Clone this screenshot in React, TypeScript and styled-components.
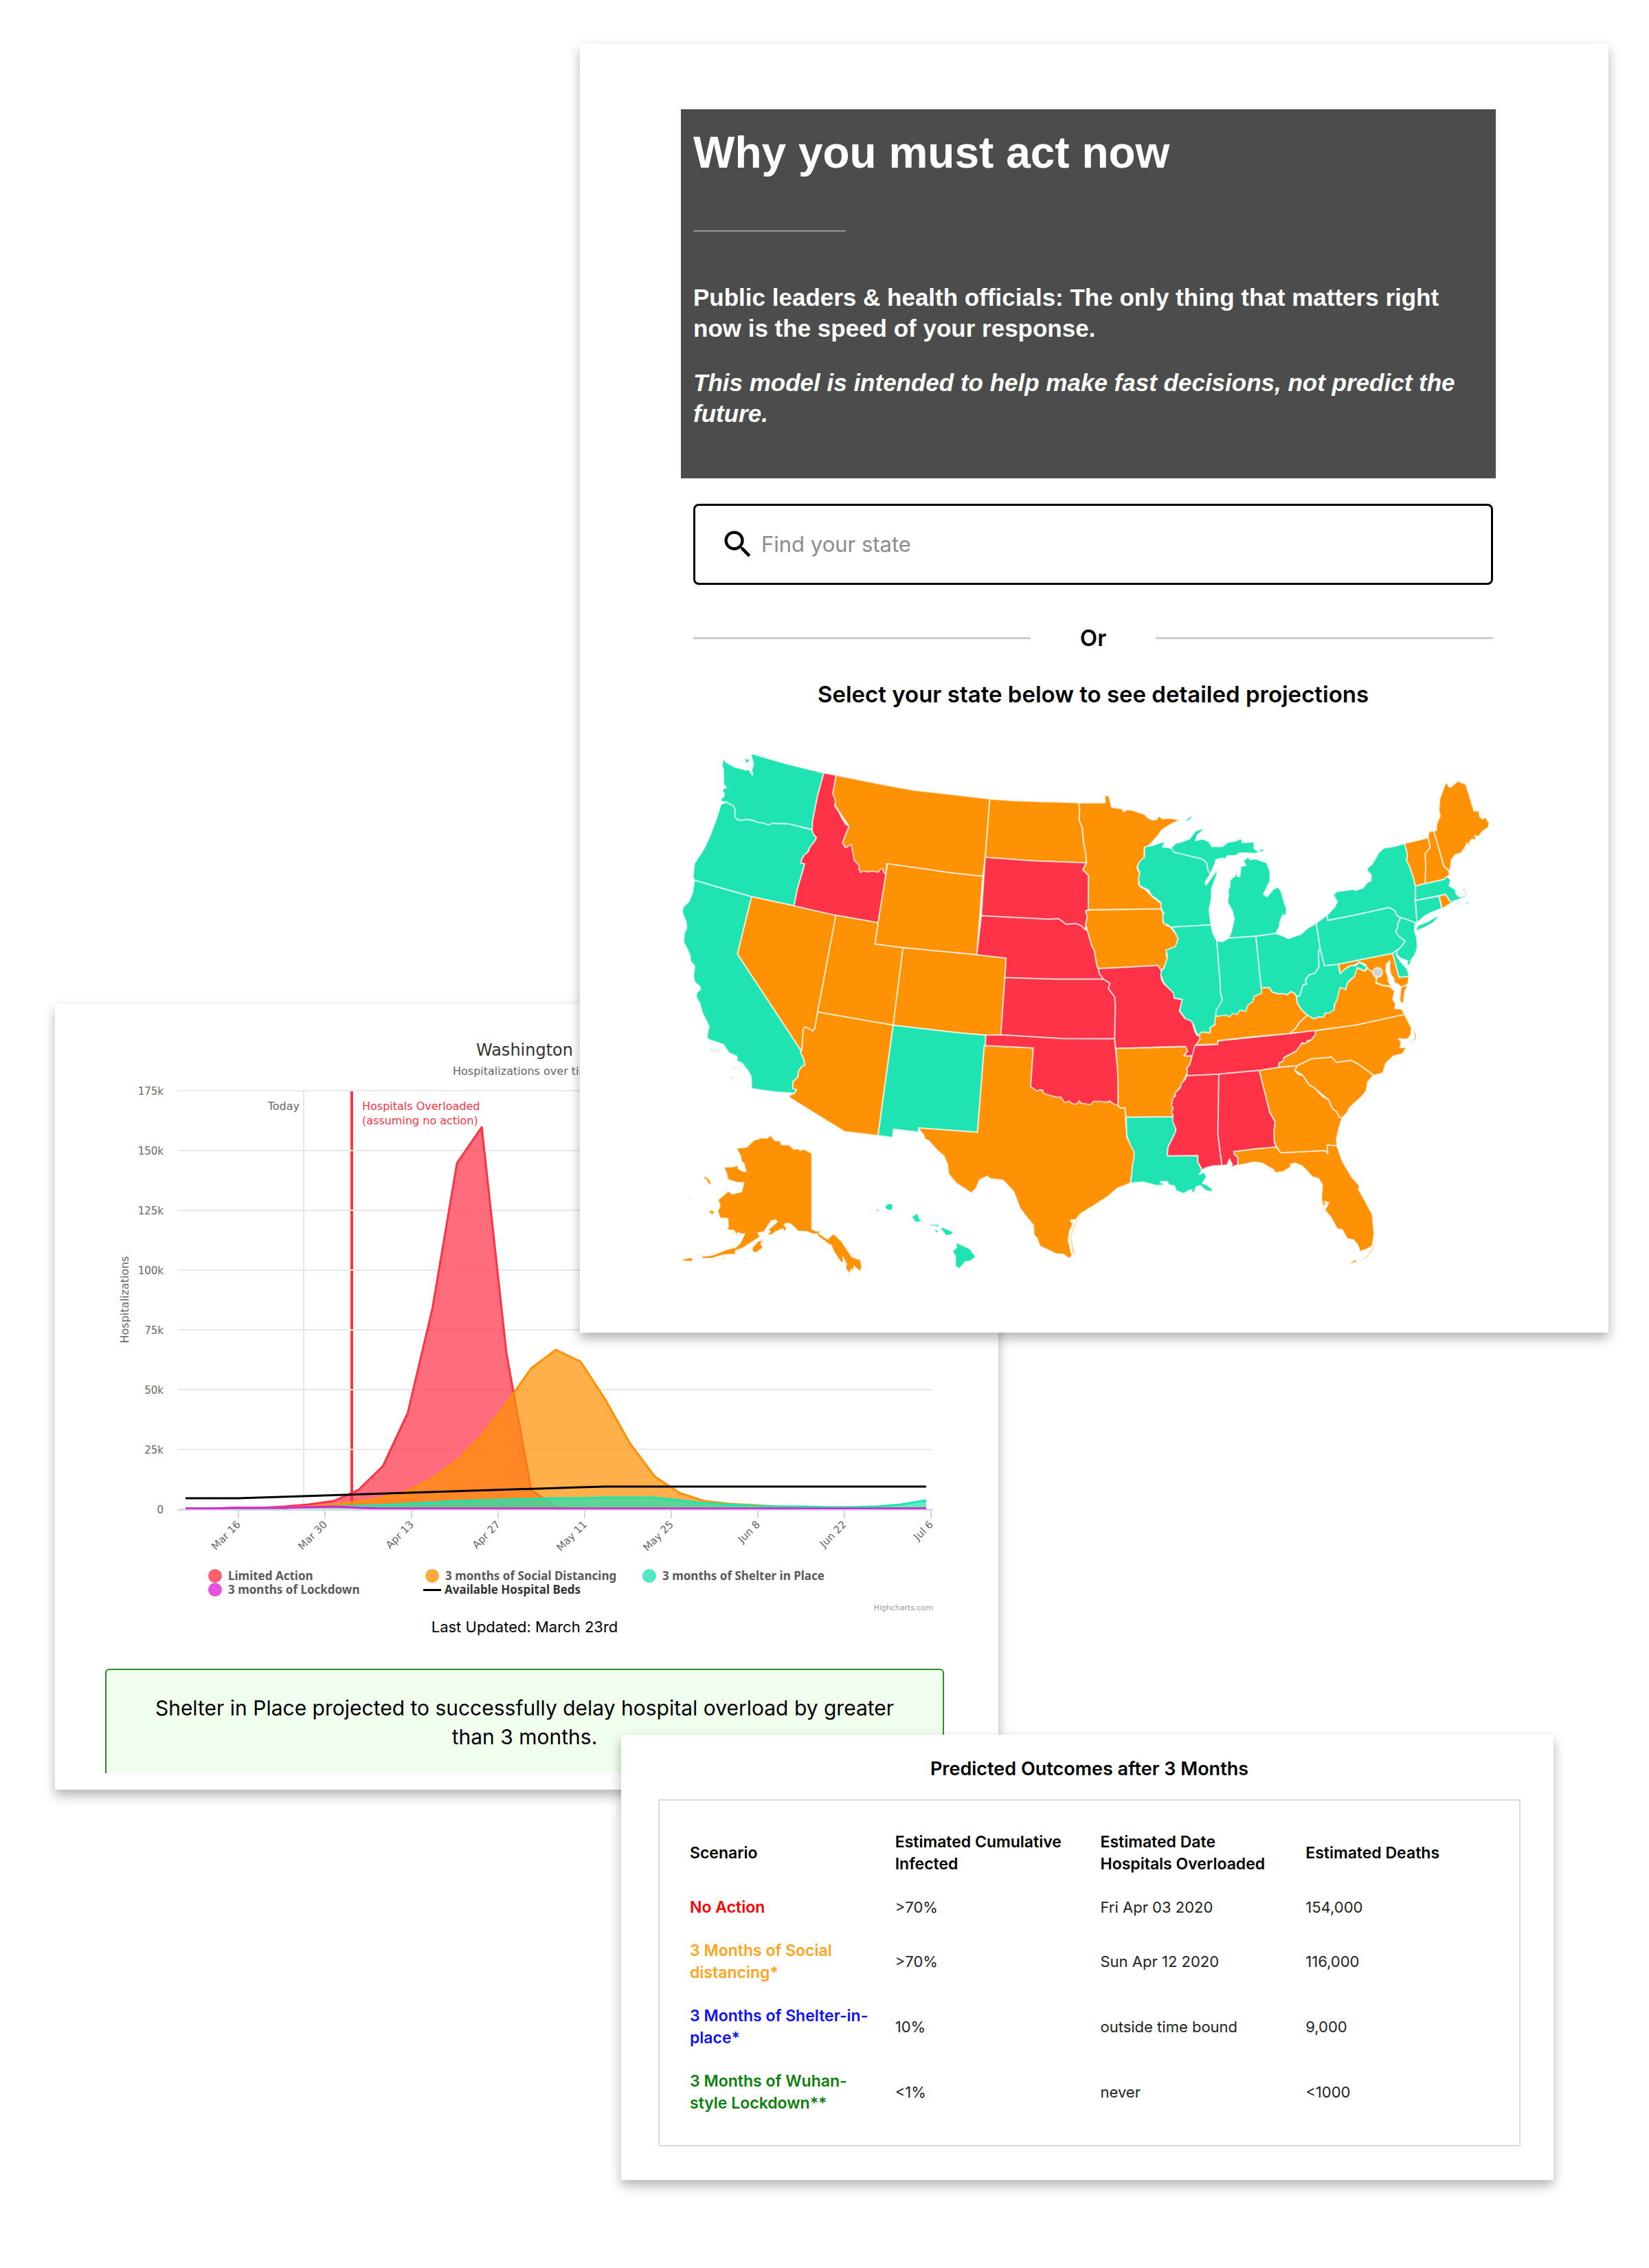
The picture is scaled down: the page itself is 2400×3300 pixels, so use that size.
import React from "react";
import styled, { createGlobalStyle } from "styled-components";
import { MdSearch } from "react-icons/md";

const teal = "#20e3b2";
const orange = "#ff9105";
const red = "#ff3348";
const magenta = "#dd22d5";

const GlobalStyle = createGlobalStyle`
  *, *::before, *::after { box-sizing: border-box; }
  body {
    margin: 0;
    background: #fff;
    color: #000;
    font-family: Inter, "Liberation Sans", sans-serif;
  }
  h1, h2, p, ul { margin: 0; padding: 0; }
`;

/* ---------- Page: three overlapping sheets on one grid ---------- */

const Page = styled.main`
  display: grid;
  grid-template-columns: 80fr 764fr 60fr 549fr 808fr 80fr 59fr;
  padding: 64px 0 126px;
`;

const Sheet = styled.section`
  background: #fff;
  box-shadow: 0 8px 16px rgba(0, 0, 0, 0.3);
  min-width: 0;
`;

const ActSheet = styled(Sheet)`
  grid-column: 3 / 7;
  grid-row: 1;
  z-index: 2;
  padding: 95px 164px 80px 147px;
`;

const ChartSheet = styled(Sheet)`
  grid-column: 2 / 5;
  grid-row: 2;
  z-index: 1;
  margin-top: -478px;
  padding: 49px 79px 24px 73px;
  display: flex;
  flex-direction: column;
`;

const OutcomeSheet = styled(Sheet)`
  grid-column: 4 / 6;
  grid-row: 3;
  z-index: 3;
  margin-top: -80px;
  padding: 34px 48px 49px 54px;
`;

/* ---------- Act now ---------- */

const Banner = styled.header`
  background: #4c4c4c;
  color: #fff;
  padding: 23px 18px 72px;
  font-family: "Liberation Sans", Arial, sans-serif;
  font-weight: 700;
`;

const BannerTitle = styled.h1`
  font-size: 64px;
  line-height: 80px;
`;

const BannerRule = styled.hr`
  width: 222px;
  height: 2px;
  margin: 73px 0;
  border: 0;
  background: #979797;
`;

const BannerText = styled.p<{ $italic?: boolean }>`
  font-size: 35px;
  line-height: 45px;
  font-style: ${(p) => (p.$italic ? "italic" : "normal")};
  & + & { margin-top: 34px; }
`;

const Picker = styled.div`
  padding: 37px 4px 0 18px;
`;

const SearchField = styled.label`
  display: flex;
  align-items: center;
  gap: 8px;
  height: 118px;
  padding: 0 36px;
  border: 3px solid #000;
  border-radius: 8px;
  svg { flex: none; }
`;

const SearchInput = styled.input`
  flex: 1;
  min-width: 0;
  border: 0;
  outline: 0;
  padding: 0;
  background: transparent;
  font: 400 31px/40px Inter, sans-serif;
  &::placeholder { color: #8c8c8c; opacity: 1; }
`;

const OrDivider = styled.div`
  display: grid;
  grid-template-columns: 1fr 182px 1fr;
  align-items: center;
  margin-top: 57px;
  font-size: 33px;
  line-height: 40px;
  font-weight: 600;
  text-align: center;
  &::before, &::after {
    content: "";
    height: 3px;
    background: #ccc;
  }
`;

const PickerHint = styled.h2`
  margin-top: 42px;
  font-size: 33px;
  line-height: 40px;
  font-weight: 600;
  text-align: center;
`;

const MapSvg = styled.svg`
  display: block;
  width: 100%;
  height: auto;
  margin-top: 59px;
  path, circle {
    stroke: rgba(255, 255, 255, 0.65);
    stroke-width: 2px;
    stroke-linejoin: round;
    vector-effect: non-scaling-stroke;
  }
`;

type Shape = [code: string, fill: string, d: string];
interface Region {
  transform: string;
  shapes: Shape[];
}

const regions: Region[] = [
  {
    transform: "translate(970 1080) scale(.33333 .35714)",
    shapes: [
      ["WA", teal, "M247 70 262 85 280 95 300 105 325 110 350 117 358 112 374 135 378 135 372 118 380 90 376 75 369 58 373 50 520 90 687 128 660 220 638 325 636 360 600 350 530 335 470 334 445 340 400 330 380 322 350 317 330 321 312 320 298 306 299 275 290 260 275 255 262 246 240 246 238 232 250 225 253 212 246 205 247 192 262 188 250 175 248 110 243 100ZM338 72 362 70 362 80 350 91 345 80ZM355 108 366 98 362 110Z"],
      ["OR", teal, "M238 256 262 246 275 255 290 260 299 275 298 306 312 320 330 321 350 317 380 322 400 330 420 331 445 340 470 331 470 334 530 335 636 360 642 378 655 390 650 402 625 432 618 450 602 462 590 480 588 495 604 498 600 512 572 600 557 669 372 632 250 600 122 565 116 550 122 497 165 435 190 385 218 315Z"],
      ["CA", teal, "M122 565 250 600 372 632 310 865 585 1255 587 1270 598 1290 605 1318 590 1325 577 1342 573 1368 553 1385 552 1413 568 1418 560 1433 480 1428 372 1414 370 1365 355 1340 330 1310 308 1302 308 1282 272 1268 250 1235 180 1212 177 1200 186 1160 158 1108 145 1065 130 1040 133 1022 148 1010 145 997 123 980 118 955 123 915 104 892 104 872 75 815 78 780 88 762 86 735 68 692 75 672 98 652 114 615ZM188 1254 206 1256 200 1263ZM210 1254 236 1265 215 1263ZM288 1321 305 1336 294 1334ZM281 1359 293 1375 284 1371Z"],
      ["NV", orange, "M372 632 557 669 740 708 660 1102 648 1168 638 1180 620 1168 605 1163 597 1172 592 1250 585 1255 310 865Z"],
      ["MT", orange, "M740 137 970 180 1080 198 1260 217 1412 234 1392 472 1381 549 1260 537 962 498 958 543 925 540 848 540 820 485 782 433 768 412 797 345 738 262 726 213Z"],
      ["ID", red, "M687 128 740 137 726 213 738 242 734 262 750 283 768 315 782 337 797 345 768 412 782 433 807 418 820 485 842 505 840 520 848 533 862 527 880 531 900 528 925 533 932 522 944 518 948 533 958 543 924 738 740 708 557 669 572 600 600 512 604 498 588 495 590 480 602 462 618 450 625 432 650 402 655 390 642 378 636 360 638 325 660 220Z"],
      ["WY", orange, "M965 498 1260 537 1381 549 1355 869 1260 860 1033 840 910 825 924 738 958 543Z"],
      ["UT", orange, "M740 708 924 738 910 825 1033 840 990 1156 660 1102Z"],
      ["CO", orange, "M1033 840 1260 860 1355 869 1483 882 1478 962 1460 1195 1392 1196 1260 1185 990 1156Z"],
      ["AZ", orange, "M660 1102 990 1156 924 1605 778 1589 535 1449 540 1440 560 1433 568 1418 552 1413 553 1385 573 1368 577 1342 590 1325 605 1318 598 1290 587 1270 592 1250 597 1172 605 1163 620 1168 638 1180 648 1168Z"],
      ["NM", teal, "M990 1156 1260 1185 1394 1196 1393 1238 1388 1238 1358 1592 1101 1574 1101 1591 991 1579 987 1613 924 1605Z"],
      ["ND", orange, "M1412 234 1510 241 1798 249 1804 268 1802 320 1816 352 1820 400 1832 465 1834 494 1600 486 1392 472Z"],
      ["SD", red, "M1392 472 1600 486 1834 494 1818 522 1843 545 1842 685 1830 690 1838 715 1830 745 1830 768 1810 750 1785 741 1745 745 1713 722 1670 724 1375 710Z"],
      ["NE", red, "M1375 710 1670 724 1713 722 1745 745 1785 741 1810 750 1830 768 1836 762 1858 835 1868 850 1880 915 1886 925 1890 945 1908 968 1700 968 1478 962 1483 882 1355 869Z"],
      ["KS", red, "M1478 962 1700 968 1908 968 1936 984 1930 1006 1958 1042 1960 1080 1957 1211 1730 1210 1460 1195Z"],
      ["TX", orange, "M1388 1238 1602 1248 1590 1405 1700 1440 1972 1470 1972 1483 1985 1493 2003 1490 2004 1531 2011 1615 2042 1661 2045 1689 2035 1727 2033 1759 2025 1799 1968 1820 1928 1853 1875 1885 1808 1923 1787 1948 1765 1949 1769 1960 1778 1958 1761 1993 1754 2030 1771 2095 1757 2105 1734 2089 1701 2087 1680 2077 1631 2056 1618 2023 1604 2009 1603 1971 1573 1937 1544 1902 1517 1834 1470 1787 1413 1781 1401 1771 1368 1785 1352 1820 1332 1839 1292 1815 1265 1799 1232 1762 1227 1722 1212 1689 1178 1661 1145 1626 1129 1619 1122 1601 1105 1582 1101 1574 1358 1592ZM1812 1925 1784 1970 1767 2020 1782 2088 1775 2088 1762 2024 1778 1970Z"],
      ["OK", red, "M1394 1196 1460 1195 1730 1210 1957 1211 1960 1250 1972 1345 1972 1483 1952 1476 1935 1463 1928 1470 1918 1466 1910 1470 1902 1466 1865 1466 1850 1480 1808 1472 1803 1462 1790 1478 1768 1474 1760 1465 1738 1470 1722 1448 1705 1449 1648 1434 1643 1420 1630 1418 1618 1424 1590 1405 1602 1248 1393 1238Z"],
      ["MN", orange, "M1798 249 1915 250 1915 219 1932 222 1944 268 1990 274 1995 286 2012 277 2035 280 2090 298 2100 310 2120 319 2140 318 2150 303 2165 314 2200 312 2240 320 2200 338 2163 360 2140 390 2105 425 2086 432 2086 475 2060 500 2054 515 2066 535 2062 580 2070 592 2090 602 2125 635 2160 660 2160 682 1842 685 1843 545 1818 522 1834 494 1832 465 1820 400 1816 352 1802 320 1804 268Z"],
      ["IA", orange, "M1842 687 2160 682 2170 707 2168 735 2185 750 2200 755 2235 798 2225 835 2185 850 2182 870 2190 885 2180 905 2170 925 2162 932 2145 912 1960 922 1886 925 1880 915 1868 850 1858 835 1830 745 1838 715 1830 690Z"],
      ["MO", red, "M1886 925 1960 922 2145 912 2160 932 2160 965 2170 985 2218 1025 2218 1045 2254 1052 2240 1098 2262 1125 2295 1138 2305 1175 2315 1195 2330 1200 2325 1230 2308 1240 2300 1280 2258 1282 2274 1262 2264 1242 1962 1250 1957 1211 1960 1080 1958 1042 1930 1006 1936 984 1908 968 1890 945Z"],
    ],
  },
  {
    transform: "translate(1620 1450) scale(.33333)",
    shapes: [
      ["AR", orange, "M12 230 318 222 325 240 308 262 345 263 335 300 322 315 325 330 318 350 295 395 272 425 258 470 262 495 260 528 57 530 52 488 32 490 22 480 22 380 18 300Z"],
      ["LA", teal, "M57 530 260 528 275 590 268 605 240 660 237 698 370 697 370 725 388 760 375 780 398 770 408 790 390 818 410 825 435 845 430 855 405 850 380 828 362 834 355 855 340 863 345 845 330 850 308 863 275 850 268 830 245 825 235 810 205 812 225 825 190 828 130 812 77 817 85 740 92 700 92 680 75 650 60 610Z"],
      ["NC", orange, "M722 312 725 292 742 285 745 270 800 240 815 215 840 205 865 192 883 170 882 152 1055 128 1272 80 1303 140 1300 170 1285 190 1245 187 1258 200 1253 225 1280 226 1265 252 1225 262 1190 295 1178 337 1137 347 1070 297 1040 282 975 290 955 268 865 275 805 305ZM1303 138 1323 165 1323 190 1290 213 1316 188 1316 165Z"],
      ["SC", orange, "M805 305 865 275 955 268 975 290 1040 282 1070 297 1137 347 1112 375 1105 415 1085 440 1030 490 1025 505 1000 533 988 530 975 505 958 493 940 453 880 403 855 388 828 347 793 325Z"],
      ["MS", red, "M322 348 462 341 458 605 475 740 440 742 405 750 390 760 370 725 370 697 237 698 240 660 268 605 275 585 260 545 262 520 256 510 262 490 255 478 262 445 272 437 270 425 295 400 297 385 318 360Z"],
      ["AL", red, "M462 341 638 325 685 510 708 550 702 595 705 640 712 660 620 668 527 680 530 692 545 705 545 738 515 747 520 735 508 712 498 738 475 740 458 605Z"],
      ["FL", orange, "M527 680 620 668 712 660 732 685 925 675 937 688 935 650 978 655 1000 720 1040 788 1075 828 1072 845 1095 885 1132 955 1140 1040 1132 1090 1110 1105 1078 1116 1070 1090 1050 1065 1022 1060 1000 1020 980 1018 950 965 925 935 942 902 922 898 930 905 918 922 910 885 914 825 898 798 870 790 848 765 825 742 795 730 775 735 775 748 740 768 708 772 700 758 650 730 615 725 545 740 545 705 530 692ZM1144 1074 1134 1110 1110 1140 1080 1156 1108 1135 1130 1105ZM1028 1173 1055 1152 1068 1158 1045 1168Z"],
      ["GA", orange, "M638 325 722 312 805 305 793 325 808 342 828 347 855 388 880 403 915 440 940 453 958 493 975 505 988 530 1000 535 988 570 975 625 978 655 935 650 937 688 925 675 732 685 712 655 705 640 702 595 708 550 685 510Z"],
      ["TN", red, "M357 217 457 212 457 197 768 165 882 150 883 170 865 192 850 195 840 208 825 205 800 240 745 270 742 285 725 292 722 312 638 325 462 341 322 348 325 330 322 315 335 300 345 263Z"],
    ],
  },
  {
    transform: "translate(1620 1110) scale(.36995 .33333)",
    shapes: [
      ["WI", teal, "M125 370 160 362 205 345 195 370 212 372 228 375 240 393 275 400 310 412 350 422 368 438 374 475 384 485 362 525 366 537 395 490 412 470 405 500 388 550 386 600 378 645 385 710 300 716 228 720 215 710 200 705 195 675 200 660 190 640 188 612 150 580 140 558 105 540 100 510 105 480 95 458 103 435 123 415Z"],
      ["MI", teal, "M228 375 245 355 270 348 300 335 325 300 358 288 350 300 330 320 325 343 350 335 375 345 388 368 430 368 450 350 480 345 505 333 508 352 555 348 555 378 575 392 560 398 500 395 480 408 450 408 440 423 430 418 405 425 400 445 384 485 374 475 368 438 350 422 310 412 240 393ZM280 260 300 240 318 232 298 255ZM573 380 592 380 592 390 580 392ZM513 430 530 415 540 425 560 422 605 440 612 462 618 480 617 520 592 575 605 588 630 555 648 545 660 560 670 600 682 640 680 670 668 665 655 700 655 715 640 748 562 760 455 768 465 740 477 685 470 650 450 612 455 580 452 560 460 540 460 515 480 495 490 468 488 498 498 500 502 470 502 455 522 450Z"],
      ["IL", teal, "M228 720 385 710 392 745 408 780 422 970 422 1000 430 1040 405 1090 405 1115 400 1130 402 1145 382 1160 382 1182 350 1178 333 1193 322 1165 318 1150 308 1130 285 1120 262 1085 272 1035 240 1030 238 1008 200 965 188 930 190 910 200 900 215 850 208 820 245 805 256 770 240 735Z"],
      ["KY", orange, "M583 985 615 983 625 1003 650 1010 670 1010 685 1015 700 1000 715 1010 722 1022 725 1052 745 1085 765 1104 735 1135 720 1160 695 1184 560 1197 412 1215 412 1230 325 1234 342 1210 340 1195 333 1193 350 1178 382 1182 382 1160 402 1145 400 1130 405 1105 500 1070 560 1000Z"],
      ["IN", teal, "M408 780 430 784 455 768 562 760 583 985 585 1008 555 1022 550 1045 530 1060 522 1088 500 1082 488 1102 472 1096 458 1112 445 1104 405 1110 405 1085 430 1040 422 1000 422 970Z"],
      ["OH", teal, "M562 760 640 748 660 755 690 770 740 750 765 725 800 703 815 815 808 825 810 895 795 920 770 930 757 950 762 972 748 970 735 1020 722 1022 715 1010 700 1000 685 1015 670 1010 650 1010 625 1003 615 983 583 985Z"],
      ["VA", orange, "M765 1104 790 1120 808 1112 828 1112 835 1095 870 1080 872 1050 890 990 895 980 915 992 920 965 945 940 958 897 990 912 1000 900 1020 915 1035 940 1035 965 1060 975 1090 980 1108 1000 1100 1035 1112 1055 1108 1075 1136 1078 1147 1101 950 1148 800 1170 695 1184 720 1160 735 1135ZM1133 982 1160 970 1148 1000 1142 1050 1132 1053 1128 1030 1131 1000Z"],
      ["MD", orange, "M886 882 960 865 1100 834 1125 938 1164 935 1160 968 1135 982 1120 968 1106 962 1105 945 1092 925 1088 900 1089 866 1075 882 1074 915 1082 935 1083 958 1096 978 1060 973 1035 962 1038 940 1020 915 1000 900 992 882 970 872 950 885 930 890 910 905 895 925Z"],
      ["WV", teal, "M815 815 832 888 886 882 893 925 910 905 935 888 955 888 968 873 985 885 997 892 992 912 960 897 950 935 938 945 922 962 915 992 893 983 880 1040 870 1060 870 1080 850 1095 835 1095 828 1112 808 1112 790 1120 765 1104 745 1085 725 1052 722 1022 735 1020 748 970 762 972 757 950 770 930 795 920 810 895 808 825Z"],
      ["PA", teal, "M800 703 840 668 845 690 945 668 1088 634 1110 650 1117 670 1132 678 1120 705 1120 722 1112 740 1125 760 1150 782 1130 810 1100 834 960 865 886 882 832 888 815 815Z"],
      ["NY", teal, "M842 668 870 635 882 610 867 580 880 565 945 555 955 560 985 548 1000 525 1015 518 1015 490 1000 475 1002 460 1020 445 1045 395 1065 375 1105 368 1147 355 1158 400 1155 430 1165 450 1175 480 1183 510 1190 545 1188 600 1196 695 1190 715 1188 700 1132 678 1117 670 1110 650 1088 634 945 668 845 690ZM1190 733 1200 712 1240 695 1270 675 1283 672 1260 700 1225 722 1195 735Z"],
      ["NJ", teal, "M1132 678 1188 700 1186 735 1195 770 1197 810 1188 840 1172 865 1168 887 1155 882 1160 868 1130 855 1117 840 1115 825 1130 810 1150 782 1125 760 1112 740 1120 722 1120 705Z"],
      ["DE", teal, "M1100 834 1115 822 1115 845 1138 880 1158 905 1164 935 1125 938Z"],
      ["VT", orange, "M1147 355 1240 330 1248 372 1228 400 1230 450 1228 530 1190 541 1183 510 1165 450 1155 430 1158 400Z"],
      ["NH", orange, "M1243 303 1262 300 1302 455 1318 470 1325 490 1300 512 1228 530 1230 450 1228 400 1248 372 1240 330Z"],
      ["ME", orange, "M1262 300 1272 298 1273 270 1287 235 1282 210 1285 160 1308 92 1315 92 1320 107 1330 108 1355 83 1388 97 1420 213 1440 213 1443 240 1455 248 1465 240 1480 268 1475 285 1450 305 1438 325 1424 320 1428 342 1412 335 1402 350 1404 366 1392 352 1385 372 1370 395 1345 405 1332 425 1325 475 1302 455Z"],
      ["MA", teal, "M1190 541 1228 530 1300 512 1315 500 1328 515 1322 540 1345 555 1350 575 1365 590 1388 580 1385 560 1370 555 1385 552 1392 575 1390 585 1360 600 1340 605 1330 615 1308 577 1190 604ZM1350 617 1365 610 1360 621ZM1382 616 1400 611 1395 621Z"],
      ["CT", teal, "M1190 604 1283 584 1292 638 1245 660 1225 672 1198 698 1195 690Z"],
      ["RI", orange, "M1283 584 1308 577 1330 615 1315 625 1295 640Z"],
    ],
  },
  {
    transform: "translate(970 1500) scale(.44643 .33333)",
    shapes: [
      ["AK", orange, "M338 458 355 482 370 482 375 500 400 500 415 520 430 517 435 524 450 520 474 538 474 868 490 878 497 872 500 890 525 912 545 888 570 920 605 990 633 1002 637 1035 630 1053 612 1030 607 1057 603 1042 597 1062 584 1040 587 1020 575 990 577 1015 567 1010 545 965 537 938 530 935 495 900 492 888 480 890 455 878 430 878 405 845 390 842 383 852 392 862 384 884 380 866 355 880 342 894 328 892 338 880 332 870 362 835 355 828 342 832 325 865 318 880 298 885 305 902 250 950 225 962 225 978 185 980 150 995 117 997 115 987 150 982 195 958 225 948 240 930 255 888 240 890 234 880 230 894 218 872 195 872 202 860 200 822 175 820 167 790 175 765 168 740 202 703 215 715 245 705 252 665 232 665 200 652 195 620 187 598 215 596 235 590 234 604 248 615 260 618 252 580 245 575 242 550 228 515 262 510 285 480 310 470 330 470ZM280 948 300 920 318 915 308 930 315 950 290 972 280 965ZM122 635 140 650 147 672 138 672 130 652 122 648ZM135 783 157 790 152 805 143 800ZM73 725 81 743 76 738ZM50 1000 80 992 88 1000 80 1010 50 1006ZM254 994 260 998 256 1002ZM180 990 192 998 186 1002Z"],
      ["HI", teal, "M682 792 688 779 694 780 688 792ZM711 770 722 757 738 758 737 780 732 788 718 783ZM799 815 818 798 825 825 836 835 812 838ZM859 846 892 850 884 858 862 853ZM872 868 888 875 880 886ZM894 857 935 880 930 892 912 897 897 872ZM943 925 990 955 1008 990 990 1008 975 1010 955 1041 942 1032 942 985 932 965 946 948Z"],
    ],
  },
];

const StateMap = () => (
  <MapSvg viewBox="991 1090 1186 770" role="img" aria-label="Find your state">
    {regions.map((region) => (
      <g key={region.transform} transform={region.transform}>
        {region.shapes.map(([code, fill, d]) => (
          <path key={code} d={d} fill={fill} />
        ))}
      </g>
    ))}
    <circle cx="2005" cy="1416" r="7" fill="#d3d3d3" />
  </MapSvg>
);

/* ---------- Chart ---------- */

const chartFont = `"DejaVu Sans", Verdana, sans-serif`;
const legendFont = `"Noto Sans", "Open Sans", sans-serif`;

const ChartTitle = styled.h2`
  font: 400 24px/36px ${chartFont};
  color: #333;
  text-align: center;
`;

const ChartSubtitle = styled.p`
  font: 400 16px/26px ${chartFont};
  color: #666;
  text-align: center;
`;

const ChartSvg = styled.svg`
  display: block;
  width: 100%;
  height: auto;
`;

const ChartText = styled.text<{ $small?: boolean }>`
  font: 400 ${(p) => (p.$small ? "15px" : "16px")} ${chartFont};
  fill: #666;
`;

const Overload = styled.tspan`
  fill: ${red};
`;

const Legend = styled.ul`
  display: grid;
  grid-template-columns: repeat(3, 316px);
  margin: 24px 0 0 150px;
  list-style: none;
  font: 700 17px/20px ${legendFont};
`;

const LegendItem = styled.li<{ $color: string; $line?: boolean }>`
  display: flex;
  align-items: center;
  gap: ${(p) => (p.$line ? "5px" : "9px")};
  margin-left: ${(p) => (p.$line ? "-3px" : "0")};
  color: ${(p) => (p.$line ? "#333" : "#5a5a5a")};
  white-space: nowrap;
  &::before {
    content: "";
    width: ${(p) => (p.$line ? "26px" : "20px")};
    height: ${(p) => (p.$line ? "3px" : "20px")};
    border-radius: ${(p) => (p.$line ? "0" : "50%")};
    background: ${(p) => p.$color};
    opacity: ${(p) => (p.$line ? 1 : 0.78)};
  }
`;

const Credit = styled.a`
  align-self: flex-end;
  margin: 9px 16px 0 0;
  font: 400 11px/16px ${chartFont};
  color: #999;
  text-decoration: none;
`;

const Updated = styled.p`
  margin-top: 6px;
  font-size: 22px;
  line-height: 26px;
  text-align: center;
`;

const Projection = styled.p`
  margin-top: 48px;
  padding: 34px 60px 32px;
  border: 2px solid #2e8b2e;
  border-bottom: 0;
  border-radius: 6px 6px 0 0;
  background: #f0ffee;
  font-size: 30px;
  line-height: 42px;
  text-align: center;
`;

const baseline = 2196;
const at = (week: number) => 270 + week * 35.93;

const limited = [2196, 2196, 2195, 2195, 2193, 2190, 2185, 2169, 2134, 2057, 1905, 1693, 1641, 1970, 2169, 2194, 2196];
const distancing = [2196, 2196, 2196, 2195, 2195, 2193, 2190, 2186, 2180, 2170, 2152, 2126, 2090, 2043, 1992, 1965, 1982, 2037, 2101, 2149, 2173, 2185, 2189, 2191, 2193, 2194, 2195, 2195, 2195, 2195, 2195];
const shelter = [2196, 2196, 2196, 2195, 2195, 2194, 2193, 2192, 2191, 2189, 2187, 2185, 2184, 2183, 2182, 2181, 2181, 2180, 2180, 2180, 2184, 2188, 2190, 2192, 2193, 2193, 2194, 2194, 2193, 2190, 2184];
const lockdown = [2196, 2196, 2195, 2195, 2195, 2194, 2193, 2195, 2196, 2196, 2196, 2196, 2196, 2196, 2196, 2196, 2196, 2196, 2196, 2196, 2196, 2196, 2196, 2196, 2196, 2196, 2196, 2196, 2196, 2196, 2196];

const linePath = (ys: number[]) => "M" + ys.map((y, i) => `${at(i)} ${y}`).join("L");

const Area = ({ ys, color }: { ys: number[]; color: string }) => (
  <g>
    <path d={`${linePath(ys)}L${at(ys.length - 1)} ${baseline}L270 ${baseline}Z`} fill={color} fillOpacity={0.72} />
    <path d={linePath(ys)} fill="none" stroke={color} strokeWidth={3} strokeLinejoin="round" />
  </g>
);

const yTicks = ["175k", "150k", "125k", "100k", "75k", "50k", "25k", "0"];
const xTicks = ["Mar 16", "Mar 30", "Apr 13", "Apr 27", "May 11", "May 25", "Jun 8", "Jun 22", "Jul 6"];

const HospitalChart = () => (
  <ChartSvg viewBox="153 1573 1221 687">
    <path d="M442 1588V2196" stroke="#e6e6e6" strokeWidth={2} />
    <path d="M512 1588V2196" stroke={red} strokeWidth={4} />
    {yTicks.map((label, i) => (
      <g key={label}>
        <path d={`M259 ${1588 + i * 87}H1358`} stroke="#e8e8e8" strokeWidth={2} />
        <ChartText $small x={238} y={1594 + i * 87} textAnchor="end">{label}</ChartText>
      </g>
    ))}
    <ChartText x={436} y={1616} textAnchor="end">Today</ChartText>
    <ChartText>
      <Overload x={527} y={1616}>Hospitals Overloaded</Overload>
      <Overload x={527} y={1637}>(assuming no action)</Overload>
    </ChartText>
    <Area ys={limited} color={red} />
    <Area ys={distancing} color={orange} />
    <Area ys={shelter} color={teal} />
    <path d={linePath(lockdown)} fill="none" stroke={magenta} strokeWidth={3} />
    <path d="M270 2181H346L845 2165 880 2164H1348" fill="none" stroke="#000" strokeWidth={3} strokeLinejoin="round" />
    <path d="M259 2198H1358" stroke="#ccd6eb" strokeWidth={2} />
    {xTicks.map((label, i) => {
      const x = 347 + i * 126;
      return (
        <g key={label}>
          <path d={`M${x} 2197V2210`} stroke="#ccd6eb" strokeWidth={2} />
          <ChartText $small textAnchor="end" transform={`translate(${x + 4} 2220) rotate(-45)`}>{label}</ChartText>
        </g>
      );
    })}
    <ChartText textAnchor="middle" transform="translate(187 1892) rotate(-90)">Hospitalizations</ChartText>
  </ChartSvg>
);

/* ---------- Outcomes ---------- */

const OutcomeTitle = styled.h2`
  font-size: 27px;
  line-height: 32px;
  font-weight: 600;
  text-align: center;
`;

const TableFrame = styled.div`
  margin-top: 28px;
  padding: 29px 12px 29px 44px;
  border: 2px solid #dcdcdc;
`;

const Table = styled.table`
  width: 100%;
  table-layout: fixed;
  border-collapse: collapse;
  font-size: 22px;
  line-height: 32px;
  text-align: left;
`;

const HeadCell = styled.th<{ $color?: string }>`
  padding: 15px 24px 16px 0;
  vertical-align: middle;
  font-size: 23px;
  font-weight: 600;
  color: ${(p) => p.$color ?? "#000"};
`;

const Cell = styled.td`
  padding: 15px 24px 16px 0;
  vertical-align: middle;
  color: #222;
`;

const headings = ["Scenario", "Estimated Cumulative Infected", "Estimated Date Hospitals Overloaded", "Estimated Deaths"];

const outcomes = [
  { name: "No Action", color: "#f00", cells: [">70%", "Fri Apr 03 2020", "154,000"] },
  { name: "3 Months of Social distancing*", color: "#ffa520", cells: [">70%", "Sun Apr 12 2020", "116,000"] },
  { name: "3 Months of Shelter-in-place*", color: "#1010f5", cells: ["10%", "outside time bound", "9,000"] },
  { name: "3 Months of Wuhan-style Lockdown**", color: "#0c7f0c", cells: ["<1%", "never", "<1000"] },
];

export default function App() {
  return (
    <>
      <GlobalStyle />
      <Page>
        <ActSheet>
          <Banner>
            <BannerTitle>Why you must act now</BannerTitle>
            <BannerRule />
            <BannerText>
              Public leaders &amp; health officials: The only thing that matters right now is the speed of your response.
            </BannerText>
            <BannerText $italic>
              This model is intended to help make fast decisions, not predict the future.
            </BannerText>
          </Banner>
          <Picker>
            <SearchField>
              <MdSearch size={52} />
              <SearchInput type="text" placeholder="Find your state" aria-label="Find your state" />
            </SearchField>
            <OrDivider>Or</OrDivider>
            <PickerHint>Select your state below to see detailed projections</PickerHint>
          </Picker>
          <StateMap />
        </ActSheet>

        <ChartSheet>
          <ChartTitle>Washington</ChartTitle>
          <ChartSubtitle>Hospitalizations over time</ChartSubtitle>
          <HospitalChart />
          <Legend>
            <LegendItem $color={red}>Limited Action</LegendItem>
            <LegendItem $color={orange}>3 months of Social Distancing</LegendItem>
            <LegendItem $color={teal}>3 months of Shelter in Place</LegendItem>
            <LegendItem $color={magenta}>3 months of Lockdown</LegendItem>
            <LegendItem $color="#000" $line>Available Hospital Beds</LegendItem>
          </Legend>
          <Credit href="#highcharts">Highcharts.com</Credit>
          <Updated>Last Updated: March 23rd</Updated>
          <Projection>
            Shelter in Place projected to successfully delay hospital overload by greater than 3 months.
          </Projection>
        </ChartSheet>

        <OutcomeSheet>
          <OutcomeTitle>Predicted Outcomes after 3 Months</OutcomeTitle>
          <TableFrame>
            <Table>
              <thead>
                <tr>
                  {headings.map((h) => (
                    <HeadCell key={h} scope="col">{h}</HeadCell>
                  ))}
                </tr>
              </thead>
              <tbody>
                {outcomes.map((row) => (
                  <tr key={row.name}>
                    <HeadCell scope="row" $color={row.color}>{row.name}</HeadCell>
                    {row.cells.map((cell) => (
                      <Cell key={cell}>{cell}</Cell>
                    ))}
                  </tr>
                ))}
              </tbody>
            </Table>
          </TableFrame>
        </OutcomeSheet>
      </Page>
    </>
  );
}
